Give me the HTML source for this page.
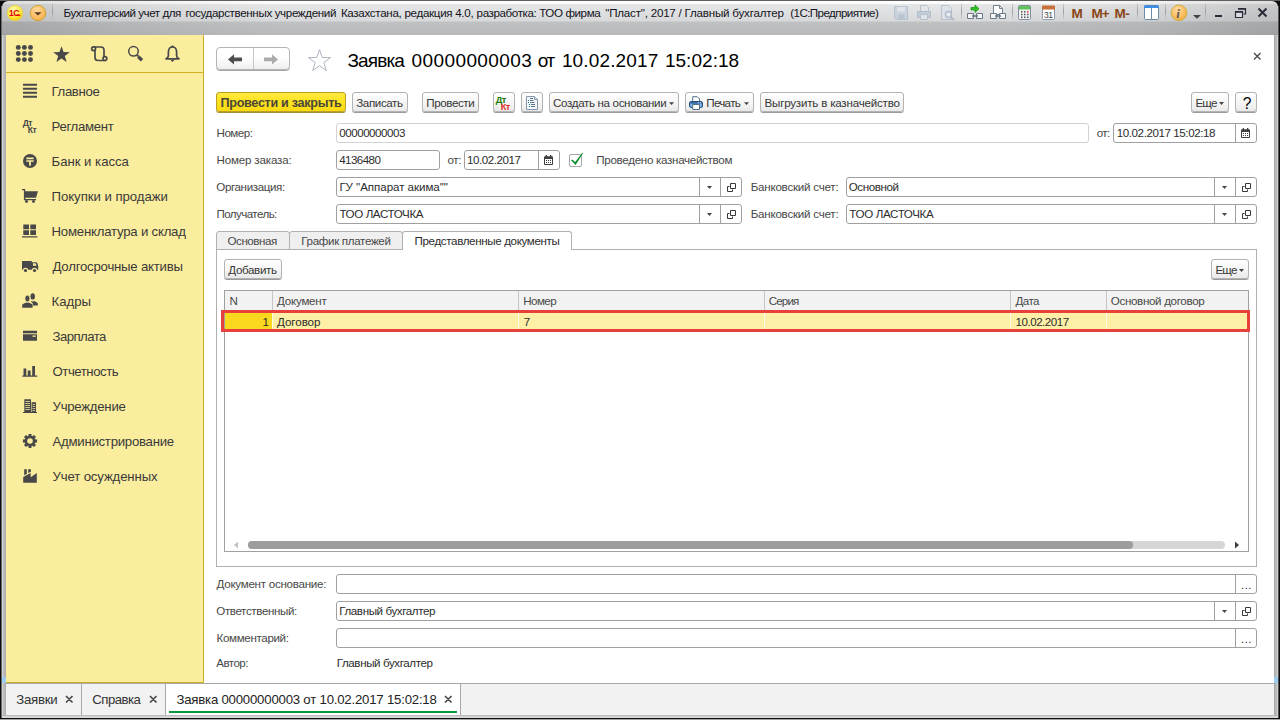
<!DOCTYPE html>
<html lang="ru">
<head>
<meta charset="utf-8">
<title>Заявка 00000000003 от 10.02.2017 15:02:18</title>
<style>
*{box-sizing:border-box;margin:0;padding:0}
html,body{width:1280px;height:720px;overflow:hidden}
body{background:#0c0c0c;font-family:"Liberation Sans",sans-serif;font-size:11px;color:#333;position:relative}
.a{position:absolute}
svg.a{z-index:5;overflow:visible}
.t{position:absolute;white-space:pre;line-height:1}
#frame{left:0;top:0;width:1280px;height:1px;background:#5e5e5e}
#fl{left:1px;top:6px;width:5px;height:712px;background:linear-gradient(90deg,#6b6b6b 0 1px,#d0d0d0 1px 2px,#bebebe 2px 3px,#b6b7b9 3px 4px,#aeafb3 4px)}
#fr{left:1274px;top:6px;width:5px;height:712px;background:linear-gradient(90deg,#a8a9ab 0 1px,#b6b7b9 1px 2px,#bbb 2px 3px,#cdcfcf 3px 4px,#555 4px)}
#fb{left:2px;top:715px;width:1276px;height:3px;background:linear-gradient(#bdbdbd 0 1px,#d0d0d0 1px 2px,#dcdcdc 2px)}
#fbb{left:0;top:719px;width:1280px;height:1px;background:#a4a4a4}
#titlebar{left:2px;top:1px;width:1276px;height:34px;border-radius:6px 6px 0 0;background:linear-gradient(90deg,rgba(0,0,0,.13) 0,rgba(0,0,0,.05) 120px,rgba(0,0,0,0) 280px,rgba(0,0,0,0) 1000px,rgba(0,0,0,.05) 1160px,rgba(0,0,0,.13) 100%),linear-gradient(#fefefe 0,#fbfbfb 2.5px,#e5e6e7 3.5px,#d8d9db 20px,#c0c1c3 21px,#b8b9bb 34px)}
#side{left:6px;top:35px;width:198px;height:648px;background:#fbed9e;border-right:1px solid #cdae24;border-bottom:1px solid #cdae24}
#sidesep{left:6px;top:72px;width:197px;height:1px;background:#cfae22}
#main{left:204px;top:35px;width:1070px;height:648px;background:#fff}
#tabs{left:6px;top:683px;width:1268px;height:32px;background:#f2f2f2;border-top:1px solid #a8a8a8}
.nav{font-size:13px;color:#3d3d3d}
.btn{position:absolute;height:20px;border:1px solid #b3b3b3;border-radius:3px;background:linear-gradient(#fff,#f4f4f4 60%,#e9e9e9);box-shadow:0 1px 0 #9b9b9b;font-size:11px;color:#333;white-space:pre;line-height:19px;text-align:center}
.inp{position:absolute;height:20px;border:1px solid #a0a0a0;border-radius:3px;background:#fff;font-size:11px;color:#222;line-height:18px;padding-left:2px;white-space:pre}
.inp.ro{border-color:#d2d2d2}
.dv{position:absolute;top:0;width:1px;height:18px;background:#a0a0a0}
.lbl{position:absolute;white-space:pre;font-size:11px;color:#404040;line-height:13px}
</style>
</head>
<body>

<!-- ICON SYMBOLS -->
<svg width="0" height="0" style="position:absolute">
<defs>
<symbol id="i-dd" viewBox="0 0 5 3"><path d="M0 0h5L2.5 3z"/></symbol>
<symbol id="i-open" viewBox="0 0 9 9"><path d="M3.5 .5h5v5h-5z M2.5 3.5h-2v5h5v-2" fill="none" stroke="#3a3a3a" stroke-width="1"/></symbol>
<symbol id="i-cal" viewBox="0 0 9 10"><rect x="0" y="1.300" width="9" height="8.700" rx="1" fill="#3f3f3f"/><path d="M1.700 0h1.300v2h-1.300zM6 0h1.300v2h-1.300z" fill="#3f3f3f"/><path d="M1 4h7v5h-7z" fill="#fff"/><path d="M2 5h1v1h-1zM4 5h1v1h-1zM6 5h1v1h-1zM2 7h1v1h-1zM4 7h1v1h-1zM6 7h1v1h-1z" fill="#3f3f3f"/></symbol>
</defs>
</svg>
<div class="a" id="frame"></div><div class="a" id="fl"></div><div class="a" id="fr"></div><div class="a" id="fb"></div><div class="a" id="fbb"></div>
<div class="a" id="titlebar"></div>
<div class="a" id="side"></div>
<div class="a" id="sidesep"></div>
<div class="a" id="main"></div>
<div class="a" id="tabs"></div>

<!-- TITLEBAR -->


<!-- TITLEBAR ICONS -->
<svg class="a" style="left:0;top:0" width="1280" height="36" viewBox="0 0 1280 36">
<defs>
<radialGradient id="g1c" cx=".4" cy=".3" r=".8"><stop offset="0" stop-color="#fffbb0"/><stop offset=".6" stop-color="#ffe53a"/><stop offset="1" stop-color="#eec400"/></radialGradient>
<radialGradient id="gor" cx=".4" cy=".3" r=".8"><stop offset="0" stop-color="#ffd9a0"/><stop offset=".7" stop-color="#fbb958"/><stop offset="1" stop-color="#f0a840"/></radialGradient>
<linearGradient id="gsep" x1="0" y1="0" x2="0" y2="1"><stop offset="0" stop-color="#a9aaad" stop-opacity=".3"/><stop offset=".5" stop-color="#9a9b9e"/><stop offset="1" stop-color="#a9aaad" stop-opacity=".3"/></linearGradient>
</defs>
<circle cx="15" cy="13" r="7.800" fill="url(#g1c)" stroke="#e4cf55" stroke-width=".8"/>
<text x="9" y="16.300" font-family="Liberation Sans,sans-serif" font-weight="bold" font-size="8.500" fill="#e3000b" style="letter-spacing:-.5px">1С</text>
<path d="M15.500 15.300h4.800" stroke="#e3000b" stroke-width="1.200"/>
<circle cx="38" cy="13" r="7.700" fill="url(#gor)" stroke="#c9a536" stroke-width="1"/>
<path d="M34.200 12.200h7.400l-3.700 3.400z" fill="#5a3b22"/>
<g fill="url(#gsep)">
<rect x="52" y="3" width="1" height="16"/><rect x="961" y="3" width="1" height="16"/><rect x="1012" y="3" width="1" height="16"/><rect x="1063" y="3" width="1" height="16"/><rect x="1137" y="3" width="1" height="16"/><rect x="1165" y="3" width="1" height="16"/><rect x="1205" y="3" width="1" height="16"/>
</g>
<!-- save (disabled) -->
<g opacity=".75">
<path d="M894.500 6.500h13v13h-11.500l-1.500-1.500z" fill="#c3cfdc" stroke="#a9b8c9"/>
<path d="M897 7h8v4.500h-8z" fill="#dfe6ee"/><path d="M898 14.500h6.500v5h-6.500z" fill="#aebccc"/>
<!-- print (disabled) -->
<path d="M920.500 5.500h6l2 2v4h-8z" fill="#e3e8ee" stroke="#aab8c8"/>
<path d="M917.500 11.500h13v6h-13z" fill="#bac7d5" stroke="#a3b2c3"/>
<path d="M920.500 14.500h7v5h-7z" fill="#e3e8ee" stroke="#aab8c8"/>
<!-- preview (disabled) -->
<path d="M941.500 5.500h7l3 3v11h-10z" fill="#dde3ea" stroke="#aab8c8"/>
<circle cx="948.500" cy="14.500" r="3" fill="#e9eef3" stroke="#9fb0c2" stroke-width="1.400"/><path d="M950.800 17l3.200 3" stroke="#9fb0c2" stroke-width="1.800"/>
</g>
<!-- link + arrow -->
<path d="M967.500 13.500h6v5h-6zM976.500 13.500h6v5h-6z" fill="#f4f6f8" stroke="#6c7885" stroke-width="1"/><path d="M972 16h6" stroke="#6c7885" stroke-width="1.600"/>
<path d="M971 7.500h4v-2.500l4 3.700l-4 3.700v-2.500h-4z" fill="#2ec320" stroke="#168a0e" stroke-width=".7"/>
<!-- link + doc -->
<path d="M993.500 5.500h6l3 3v6h-9z" fill="#fff" stroke="#77838f"/><path d="M999.500 5.500v3h3" fill="none" stroke="#77838f"/>
<path d="M990.500 13.500h6v5h-6zM999.500 13.500h6v5h-6z" fill="#f4f6f8" stroke="#6c7885" stroke-width="1"/><path d="M995 16h6" stroke="#6c7885" stroke-width="1.600"/>
<!-- calculator -->
<rect x="1018.500" y="5.500" width="12" height="14" rx="1" fill="#f1f3f4" stroke="#7f8f9e"/>
<rect x="1019" y="6" width="11" height="3.500" fill="#5fc35a"/>
<path d="M1021 11h1.500v1.500h-1.500zM1024 11h1.500v1.500h-1.500zM1021 13.700h1.500v1.500h-1.500zM1024 13.700h1.500v1.500h-1.500zM1021 16.400h1.500v1.500h-1.500zM1024 16.400h1.500v1.500h-1.500zM1027 13.700h1.500v1.500h-1.500zM1027 16.400h1.500v1.500h-1.500z" fill="#555"/><path d="M1027 11h1.500v1.500h-1.500z" fill="#e33"/>
<!-- calendar -->
<rect x="1042.500" y="6.500" width="12" height="13" rx="1" fill="#fff" stroke="#8b99a7"/>
<path d="M1042 6.500c0-.6.400-1 1-1h11c.6 0 1 .4 1 1v3h-13z" fill="#c9703a"/>
<text x="1044" y="18" font-family="Liberation Sans,sans-serif" font-size="8.500" fill="#444" style="letter-spacing:-.4px">31</text>
<!-- M M+ M- -->
<g font-family="Liberation Sans,sans-serif" font-weight="bold" font-size="13.500" fill="#8a4513">
<text x="1071.500" y="18">M</text><text x="1091.500" y="18" style="letter-spacing:-1px">M+</text><text x="1114.500" y="18" style="letter-spacing:-.5px">M-</text>
</g>
<!-- panels -->
<rect x="1144.500" y="5.500" width="14" height="14" rx="1" fill="#fff" stroke="#6f8aa8"/>
<path d="M1144 6.500c0-.6.400-1 1-1h13c.6 0 1 .4 1 1v1.500h-15z" fill="#3d8ee6"/>
<path d="M1151.500 8v11.500" stroke="#6f8aa8"/>
<!-- info -->
<circle cx="1179" cy="12.800" r="7.800" fill="url(#gor)" stroke="#cdae3e" stroke-width="1"/>
<text x="1176.300" y="17.500" font-family="Liberation Serif,serif" font-weight="bold" font-style="italic" font-size="13" fill="#5c5c5c">i</text>
<path d="M1193 15h8l-4 3.800z" fill="#444"/>
<!-- window controls -->
<path d="M1215 15h7v2h-7z" fill="#2b2b3a"/>
<path d="M1238.500 8.500h7v5.500h-2" fill="none" stroke="#2b2b3a" stroke-width="1.200"/><path d="M1238 8h8v1.800h-8z" fill="#2b2b3a"/>
<path d="M1235.500 11.500h7v6h-7z" fill="#dcdde0" stroke="#2b2b3a" stroke-width="1.200"/><path d="M1235 11h8v1.800h-8z" fill="#2b2b3a"/>
<path d="M1258.500 8.500l8 8M1266.500 8.500l-8 8" stroke="#2b2b3a" stroke-width="2"/>
</svg>

<!-- SIDEBAR -->


<!-- SIDEBAR ICONS -->
<svg class="a" style="left:0;top:0" width="204" height="500" viewBox="0 0 204 500" fill="#484848">
<g><circle cx="18.3" cy="47.4" r="2.45"/><circle cx="24.4" cy="47.4" r="2.45"/><circle cx="30.5" cy="47.4" r="2.45"/><circle cx="18.3" cy="53.5" r="2.45"/><circle cx="24.4" cy="53.5" r="2.45"/><circle cx="30.5" cy="53.5" r="2.45"/><circle cx="18.3" cy="59.6" r="2.45"/><circle cx="24.4" cy="59.6" r="2.45"/><circle cx="30.5" cy="59.6" r="2.45"/></g>
<polygon points="61.50,46.20 63.56,52.07 69.77,52.21 64.83,55.98 66.61,61.94 61.50,58.40 56.39,61.94 58.17,55.98 53.23,52.21 59.44,52.07"/>
<g fill="none" stroke="#484848" stroke-width="1.7" stroke-linejoin="round" stroke-linecap="round">
<path d="M95 50.5v7c0 2 1.3 3 3 3h7"/>
<path d="M93.6 47h7.4c2 0 3 1.2 3 3v6.5"/>
<circle cx="93.6" cy="48.8" r="1.9" fill="#fbed9e"/><circle cx="104.9" cy="58.6" r="1.9" fill="#fbed9e"/>
</g>
<circle cx="133.5" cy="51.3" r="4.800" fill="none" stroke="#484848" stroke-width="1.500"/>
<path d="M138.300 56.800l3.700 3.400" stroke="#484848" stroke-width="3.400" stroke-linecap="butt"/>
<path d="M137 55l1.500 1.500" stroke="#484848" stroke-width="1.800"/>
<path d="M166 58.800c1.800-.9 2.400-2 2.400-3.300v-3.500c0-3 1.700-5.200 4.100-5.200s4.100 2.200 4.100 5.200v3.500c0 1.300.6 2.400 2.400 3.300z" fill="none" stroke="#484848" stroke-width="1.700" stroke-linejoin="round"/>
<path d="M171.100 46.800l1.400-1.900l1.400 1.900zM170.300 59.800h4.400l-2.200 2.200z"/>
<!-- nav icons -->
<path d="M23 84h14v2h-14zM23 88h14v2h-14zM23 92h14v2h-14zM23 96h14v2h-14z" transform="translate(0,-.3)"/>
<text x="22.800" y="125.700" font-family="Liberation Sans,sans-serif" font-weight="bold" font-size="8.600" style="letter-spacing:-.6px">Дт</text>
<text x="27.800" y="133.200" font-family="Liberation Sans,sans-serif" font-weight="bold" font-size="8.600" style="letter-spacing:-.6px">Кт</text>
<circle cx="30" cy="161" r="7"/>
<path d="M26.300 157.500h7.400v1.700h-7.400zM26.300 160.200h7.400v1.600h-2.800v4h-1.800v-4h-2.800z" fill="#fbed9e"/>
<!-- cart -->
<path d="M22 189h3.200v2.200h12.800l-2 6.500h-10.800v1.300h10.800v1.300h-12.100v-10h-1.900z"/>
<circle cx="26.500" cy="201.500" r="1.450"/><circle cx="33.500" cy="201.500" r="1.450"/>
<!-- boxes -->
<path d="M23.300 224.500h5.700v4.700h-5.700zM30.300 224.500h5.700v4.700h-5.700zM23.300 230.300h5.700v4.700h-5.700zM30.300 230.300h5.700v4.700h-5.700zM22 236.200h15.400v1.400h-15.400z"/>
<!-- truck -->
<path d="M22 261h9.800v1.200h4c.8 0 1.400.4 1.600 1.100l.8 2.700v3.700h-16.200z"/>
<path d="M33 263.200h2.600l1 2.600h-3.600z" fill="#fbed9e"/>
<circle cx="25.500" cy="270.500" r="2.700" fill="#fbed9e"/><circle cx="34.500" cy="270.500" r="2.700" fill="#fbed9e"/>
<circle cx="25.500" cy="270.500" r="1.600"/><circle cx="34.500" cy="270.500" r="1.600"/>
<!-- people -->
<ellipse cx="32.700" cy="296.400" rx="2.200" ry="3.200"/>
<path d="M31 301c1.200.5 2.200.5 3.400 0l2.600 1.500c.5.300.8.700.8 1.300v1.700h-5v-1.500c0-1-.6-1.600-1.800-2.200z"/>
<ellipse cx="27.400" cy="298.500" rx="2.400" ry="3.300" stroke="#fbed9e" stroke-width=".6"/>
<path d="M22.200 307.700v-2.400c0-.6.300-1 .8-1.300l3.200-1.500c.8.400 1.600.4 2.400 0l3.200 1.500c.5.300.8.700.8 1.300v2.400z"/>
<!-- card -->
<path d="M23 330.700h14v2.500h-14zM23 334.300h14v6.500h-14z"/><path d="M32.500 335.500h3.300v1.300h-3.300z" fill="#fbed9e"/>
<!-- chart -->
<path d="M23.500 368.500h2.800v7h-2.800zM27.800 370.500h2.800v5h-2.800zM32.200 366h2.800v9.500h-2.800zM22.300 375.500h15v1.200h-15z"/>
<!-- building -->
<path d="M24.300 399.300h6.700v13h-6.700zM31.600 402.300h4.400v10h-4.400zM23 412h14v1h-14z"/>
<path d="M25.300 401h4.700v.8h-4.700zM25.300 403h4.700v.8h-4.700zM25.300 405h4.700v.8h-4.700zM25.300 407h4.700v.8h-4.700zM25.300 409h4.700v.8h-4.700zM32.500 404h2.600v.8h-2.600zM32.500 406h2.600v.8h-2.600zM32.500 408h2.600v.8h-2.600zM32.500 410h2.600v.8h-2.600z" fill="#fbed9e"/>
<!-- gear -->
<path d="M34.93,439.34 L37.06,439.61 L37.06,442.39 L34.93,442.66 L34.66,443.32 L35.98,445.01 L34.01,446.98 L32.32,445.66 L31.66,445.93 L31.39,448.06 L28.61,448.06 L28.34,445.93 L27.68,445.66 L25.99,446.98 L24.02,445.01 L25.34,443.32 L25.07,442.66 L22.94,442.39 L22.94,439.61 L25.07,439.34 L25.34,438.68 L24.02,436.99 L25.99,435.02 L27.68,436.34 L28.34,436.07 L28.61,433.94 L31.39,433.94 L31.66,436.07 L32.32,436.34 L34.01,435.02 L35.98,436.99 L34.66,438.68z"/><circle cx="30" cy="441" r="2.800" fill="#fbed9e"/>
<!-- factory -->
<path d="M23.200 482.800v-5.800l7.500-3.900v4.200l6.100-4.300v9.800zM24.200 469.200h2.600v4.700l-2.600 1.400zM28.200 469.200h2.700v2.500l-2.700 1.400z"/>
</svg>

<!-- HEADER -->


<!-- NAV / STAR / CLOSE -->
<div class="a" style="left:216px;top:47px;width:74px;height:23px;border:1px solid #b4b4b4;border-radius:4px;background:linear-gradient(#fff 40%,#efefef);box-shadow:0 1px 0 #a6a6a6"></div>
<div class="a" style="left:253px;top:48px;width:1px;height:21px;background:#c8c8c8"></div>
<svg class="a" style="left:0;top:36px" width="1280" height="40" viewBox="0 36 1280 40">
<path d="M228 59.400l6-5.200v3.400h8v3.600h-8v3.400z" fill="#4d4d4d"/>
<path d="M278 59.400l-6-5.200v3.400h-8v3.600h8v3.400z" fill="#ababab"/>
<polygon points="319.50,49.60 322.20,57.48 330.53,57.62 323.87,62.62 326.32,70.58 319.50,65.80 312.68,70.58 315.13,62.62 308.47,57.62 316.80,57.48" fill="#fff" stroke="#aab4c0" stroke-width="1"/>
<path d="M1254 53l6.500 6.500M1260.500 53l-6.500 6.500" stroke="#4a4a4a" stroke-width="1.400"/>
</svg>
<!-- TOOLBAR ICONS -->
<svg class="a" style="left:480px;top:90px" width="280" height="26" viewBox="480 90 280 26">
<text x="495.800" y="102.900" font-family="Liberation Sans,sans-serif" font-weight="bold" font-size="9.200" fill="#1b7a00" style="letter-spacing:-.6px">Дт</text>
<text x="500.800" y="110.200" font-family="Liberation Sans,sans-serif" font-weight="bold" font-size="9.200" fill="#e6302a" style="letter-spacing:-.6px">Кт</text>
<path d="M526.500 96.500h8l3 3v10h-11z" fill="#f3f6f8" stroke="#8497ab"/><path d="M534.500 96.500v3h3" fill="#d7e6e4" stroke="#8497ab"/>
<path d="M528 100.500h1M528 102.500h1M529 104.500h1M529 106.500h1" stroke="#1f6f8a" stroke-width="1"/>
<path d="M530 98.500h3M530 100.500h3.500M530 102.500h4.500M531 104.500h4M531 106.500h4" stroke="#5d7389" stroke-width="1"/>
<path d="M669 102.300h5l-2.500 2.700z" fill="#444"/>
<path d="M692.700 96.700h4.600l2.200 2.200v2.600h-6.800z" fill="#fff" stroke="#55728c" stroke-width="1"/>
<rect x="689.500" y="101.500" width="13" height="6" rx="1.600" fill="#5b8bc9" stroke="#1f4e79" stroke-width="1"/>
<path d="M690.500 102h11v1.600h-11z" fill="#3c6aa6"/><path d="M690.500 104h2v3h-2zM699.500 104h2v3h-2z" fill="#8db4e0"/>
<path d="M697.800 102.200h1v1h-1zM699.800 102.200h1v1h-1z" fill="#fff"/>
<path d="M692.700 104.500h6.800v5h-6.800z" fill="#fff" stroke="#55728c" stroke-width="1"/>
<path d="M744 102.300h5l-2.500 2.700z" fill="#444"/>
</svg>
<svg class="a" style="left:1219px;top:102px" width="5" height="3" fill="#444"><use href="#i-dd"/></svg>
<svg class="a" style="left:1239px;top:269px" width="5" height="3" fill="#444"><use href="#i-dd"/></svg>
<!-- CHECKBOX -->
<div class="a" style="left:569px;top:154px;width:13px;height:13px;border:1px solid #a6a6a6;border-radius:2px;background:#fff"></div>
<svg class="a" style="left:568px;top:150px" width="18" height="18" viewBox="568 150 18 18"><path d="M571 160.300l1.200-.8l3 2.600l7-9.300l.8.500l-7.400 11.700z" fill="#0b8f2f"/></svg>
<!-- SCROLL ARROWS -->
<svg class="a" style="left:230px;top:538px" width="1020" height="14" viewBox="230 538 1020 14"><path d="M234 545l4-3.500v7z" fill="#c4c4c4"/><path d="M1239 545l-4-3.500v7z" fill="#3c3c3c"/></svg>
<!-- TAB CLOSE X -->
<svg class="a" style="left:0;top:690px" width="470" height="20" viewBox="0 690 470 20" stroke="#4a4a4a" stroke-width="1.700"><path d="M66 696l6.500 6.500M72.500 696l-6.500 6.500M150 696l6.500 6.500M156.500 696l-6.500 6.500M445 696l6.500 6.500M451.500 696l-6.500 6.500"/></svg>

<!-- TOOLBAR -->
<div class="btn" id="b1" style="left:216px;top:92px;width:130px;background:linear-gradient(#ffea40,#fde21f 50%,#f9da12);border-color:#b9a024;box-shadow:0 1px 0 #a4923a"></div>
<div class="btn" style="left:352px;top:92px;width:56px"></div>
<div class="btn" style="left:422px;top:92px;width:57px"></div>
<div class="btn" style="left:493px;top:92px;width:22px"></div>
<div class="btn" style="left:521px;top:92px;width:22px"></div>
<div class="btn" style="left:549px;top:92px;width:130px;text-align:left;padding-left:3px"></div>
<div class="btn" style="left:685px;top:92px;width:69px;text-align:left;padding-left:21px"></div>
<div class="btn" style="left:760px;top:92px;width:144px"></div>
<div class="btn" style="left:1191px;top:92px;width:38px;text-align:left;padding-left:4px"></div>
<div class="btn" style="left:1235px;top:92px;width:22px;font-size:15px;font-weight:bold;color:#000"></div>

<!-- FORM ROWS -->
<div class="inp ro" style="left:336px;top:123px;width:753px"></div>
<div class="inp" style="left:1113px;top:123px;width:144px"><div class="dv" style="left:121px"></div><svg class="a" style="left:127px;top:4px" width="9" height="10"><use href="#i-cal"/></svg></div>

<div class="inp" style="left:336px;top:150px;width:104px"></div>
<div class="inp" style="left:464px;top:150px;width:96px"><div class="dv" style="left:73px"></div><svg class="a" style="left:79px;top:4px" width="9" height="10"><use href="#i-cal"/></svg></div>

<div class="inp" style="left:336px;top:177px;width:406px"><div class="dv" style="left:362px"></div><svg class="a" style="left:370px;top:8px" width="5" height="3" fill="#444"><use href="#i-dd"/></svg><div class="dv" style="left:383px"></div><svg class="a" style="left:390px;top:5px" width="9" height="9"><use href="#i-open"/></svg></div>
<div class="inp" style="left:846px;top:177px;width:411px"><div class="dv" style="left:367px"></div><svg class="a" style="left:375px;top:8px" width="5" height="3" fill="#444"><use href="#i-dd"/></svg><div class="dv" style="left:388px"></div><svg class="a" style="left:395px;top:5px" width="9" height="9"><use href="#i-open"/></svg></div>

<div class="inp" style="left:336px;top:204px;width:406px"><div class="dv" style="left:362px"></div><svg class="a" style="left:370px;top:8px" width="5" height="3" fill="#444"><use href="#i-dd"/></svg><div class="dv" style="left:383px"></div><svg class="a" style="left:390px;top:5px" width="9" height="9"><use href="#i-open"/></svg></div>
<div class="inp" style="left:846px;top:204px;width:411px"><div class="dv" style="left:367px"></div><svg class="a" style="left:375px;top:8px" width="5" height="3" fill="#444"><use href="#i-dd"/></svg><div class="dv" style="left:388px"></div><svg class="a" style="left:395px;top:5px" width="9" height="9"><use href="#i-open"/></svg></div>

<!-- TAB PANEL -->
<div class="a" id="panel" style="left:216px;top:249px;width:1041px;height:318px;border:1px solid #b0b0b0;background:#fff"></div>
<div class="a tab" style="left:216px;top:231px;width:74px;height:19px;border:1px solid #b0b0b0;border-radius:3px 3px 0 0;background:#efefef"></div>
<div class="a tab" style="left:289px;top:231px;width:114px;height:19px;border:1px solid #b0b0b0;border-radius:3px 3px 0 0;background:#efefef"></div>
<div class="a tab" style="left:402px;top:231px;width:170px;height:19px;border:1px solid #b0b0b0;border-bottom:none;border-radius:3px 3px 0 0;background:#fff"></div>

<div class="btn" style="left:224px;top:259px;width:58px"></div>
<div class="btn" style="left:1211px;top:259px;width:38px;text-align:left;padding-left:4px"></div>

<!-- TABLE -->
<div class="a" id="tbl" style="left:224px;top:290px;width:1025px;height:262px;border:1px solid #a0a0a0;background:#fff"></div>
<div class="a" id="thead" style="left:225px;top:291px;width:1023px;height:20px;background:#f2f2f2;border-bottom:1px solid #d0d0d0"></div>
<div class="a" id="trow" style="left:225px;top:311px;width:1023px;height:20px;background:#fdf0a6"></div>
<div class="a" style="left:225px;top:311px;width:47px;height:20px;background:#fad81e"></div>
<div class="a" style="left:272px;top:291px;width:1px;height:19px;background:#c6c6c6"></div><div class="a" style="left:272px;top:311px;width:1px;height:20px;background:#fffbe6"></div><div class="a" style="left:518px;top:291px;width:1px;height:19px;background:#c6c6c6"></div><div class="a" style="left:518px;top:311px;width:1px;height:20px;background:#fffbe6"></div><div class="a" style="left:764px;top:291px;width:1px;height:19px;background:#c6c6c6"></div><div class="a" style="left:764px;top:311px;width:1px;height:20px;background:#fffbe6"></div><div class="a" style="left:1010px;top:291px;width:1px;height:19px;background:#c6c6c6"></div><div class="a" style="left:1010px;top:311px;width:1px;height:20px;background:#fffbe6"></div><div class="a" style="left:1106px;top:291px;width:1px;height:19px;background:#c6c6c6"></div><div class="a" style="left:1106px;top:311px;width:1px;height:20px;background:#fffbe6"></div>
<div class="a" id="red" style="left:221px;top:310px;width:1029px;height:22px;border:3px solid #e8413c"></div>


<!-- SCROLLBAR -->
<div class="a" style="left:248px;top:541px;width:977px;height:8px;border-radius:4px;background:#d6d6d6"></div>
<div class="a" style="left:248px;top:541px;width:885px;height:8px;border-radius:4px;background:#9c9c9c"></div>

<!-- BOTTOM FIELDS -->
<div class="inp" style="left:336px;top:574px;width:921px"><div class="dv" style="left:898px"></div><span class="a" style="left:904px;top:1px;letter-spacing:.6px">...</span></div>
<div class="inp" style="left:336px;top:601px;width:921px"><div class="dv" style="left:877px"></div><svg class="a" style="left:885px;top:8px" width="5" height="3" fill="#444"><use href="#i-dd"/></svg><div class="dv" style="left:898px"></div><svg class="a" style="left:905px;top:5px" width="9" height="9"><use href="#i-open"/></svg></div>
<div class="inp" style="left:336px;top:628px;width:921px"><div class="dv" style="left:898px"></div><span class="a" style="left:904px;top:1px;letter-spacing:.6px">...</span></div>

<!-- BOTTOM TABS -->
<div class="a" style="left:166px;top:684px;width:294px;height:31px;background:#fff"></div>
<div class="a" style="left:81px;top:684px;width:1px;height:31px;background:#a8a8a8"></div>
<div class="a" style="left:165px;top:684px;width:1px;height:31px;background:#a8a8a8"></div>
<div class="a" style="left:460px;top:684px;width:1px;height:31px;background:#a8a8a8"></div>
<div class="a" style="left:169px;top:711px;width:288px;height:2px;background:#0b9a3b"></div>
<div class="a" style="left:2px;top:677px;width:4px;height:6px;background:#9ccbf0"></div>
<div class="a" style="left:1274px;top:677px;width:4px;height:6px;background:#9ccbf0"></div>
<!-- TEXTS -->
<div class="t" style="left:63.50px;top:6.90px;font-size:11.6px;color:#141420;letter-spacing:-0.463px">Бухгалтерский учет для</div>
<div class="t" style="left:185.40px;top:6.90px;font-size:11.6px;color:#141420;letter-spacing:-0.359px">государственных учреждений</div>
<div class="t" style="left:340.90px;top:6.90px;font-size:11.6px;color:#141420;letter-spacing:-0.307px">Казахстана, редакция 4.0,</div>
<div class="t" style="left:476.60px;top:6.90px;font-size:11.6px;color:#141420;letter-spacing:-0.397px">разработка: ТОО фирма</div>
<div class="t" style="left:605.30px;top:6.90px;font-size:11.6px;color:#141420;letter-spacing:-0.216px">"Пласт", 2017 / Главный бухгалтер</div>
<div class="t" style="left:790.30px;top:6.90px;font-size:11.6px;color:#141420;letter-spacing:-0.584px">(1С:Предприятие)</div>
<div class="t" style="left:51.50px;top:84.75px;font-size:13.2px;color:#3a3a3a;letter-spacing:-0.359px">Главное</div>
<div class="t" style="left:51.50px;top:119.75px;font-size:13.2px;color:#3a3a3a;letter-spacing:-0.317px">Регламент</div>
<div class="t" style="left:51.50px;top:154.75px;font-size:13.2px;color:#3a3a3a;letter-spacing:-0.020px">Банк и касса</div>
<div class="t" style="left:51.50px;top:189.75px;font-size:13.2px;color:#3a3a3a;letter-spacing:-0.042px">Покупки и продажи</div>
<div class="t" style="left:51.50px;top:224.75px;font-size:13.2px;color:#3a3a3a;letter-spacing:-0.210px">Номенклатура и склад</div>
<div class="t" style="left:52.50px;top:259.75px;font-size:13.2px;color:#3a3a3a;letter-spacing:-0.219px">Долгосрочные активы</div>
<div class="t" style="left:51.50px;top:294.75px;font-size:13.2px;color:#3a3a3a;letter-spacing:-0.011px">Кадры</div>
<div class="t" style="left:52.50px;top:329.75px;font-size:13.2px;color:#3a3a3a;letter-spacing:-0.558px">Зарплата</div>
<div class="t" style="left:52.50px;top:364.75px;font-size:13.2px;color:#3a3a3a;letter-spacing:-0.456px">Отчетность</div>
<div class="t" style="left:52.50px;top:399.75px;font-size:13.2px;color:#3a3a3a;letter-spacing:-0.252px">Учреждение</div>
<div class="t" style="left:52.50px;top:434.75px;font-size:13.2px;color:#3a3a3a;letter-spacing:-0.260px">Администрирование</div>
<div class="t" style="left:52.50px;top:469.75px;font-size:13.2px;color:#3a3a3a;letter-spacing:-0.137px">Учет осужденных</div>
<div class="t" style="left:347.50px;top:50.70px;font-size:19px;color:#000;letter-spacing:-0.871px">Заявка</div>
<div class="t" style="left:411.60px;top:50.70px;font-size:19px;color:#000;letter-spacing:0.393px">00000000003</div>
<div class="t" style="left:537.80px;top:50.70px;font-size:19px;color:#000;letter-spacing:-1.349px">от</div>
<div class="t" style="left:561.90px;top:50.70px;font-size:19px;color:#000;letter-spacing:0.142px">10.02.2017</div>
<div class="t" style="left:664.90px;top:50.70px;font-size:19px;color:#000;letter-spacing:0.044px">15:02:18</div>
<div class="t" style="left:220.50px;top:97.00px;font-size:12.6px;color:#4b4637;font-weight:700;letter-spacing:-0.295px">Провести и закрыть</div>
<div class="t" style="left:356.25px;top:97.00px;font-size:11.6px;color:#363636;letter-spacing:-0.394px">Записать</div>
<div class="t" style="left:426.25px;top:97.00px;font-size:11.6px;color:#363636;letter-spacing:-0.402px">Провести</div>
<div class="t" style="left:553.00px;top:97.00px;font-size:11.6px;color:#363636;letter-spacing:-0.345px">Создать на основании</div>
<div class="t" style="left:706.25px;top:97.00px;font-size:11.6px;color:#363636;letter-spacing:-0.688px">Печать</div>
<div class="t" style="left:764.50px;top:97.00px;font-size:11.6px;color:#363636;letter-spacing:-0.209px">Выгрузить в казначейство</div>
<div class="t" style="left:1195.50px;top:96.90px;font-size:11.6px;color:#363636;letter-spacing:-0.871px">Еще</div>
<div class="t" style="left:1242.70px;top:95.80px;font-size:15.6px;color:#000">?</div>
<div class="t" style="left:216.50px;top:126.80px;font-size:11.6px;color:#484848;letter-spacing:-0.487px">Номер:</div>
<div class="t" style="left:339.25px;top:126.80px;font-size:11.6px;color:#2c2c2c;letter-spacing:-0.473px">00000000003</div>
<div class="t" style="left:1096.75px;top:126.80px;font-size:11.6px;color:#484848;letter-spacing:-0.627px">от:</div>
<div class="t" style="left:1116.75px;top:126.80px;font-size:11.6px;color:#2c2c2c;letter-spacing:-0.427px">10.02.2017 15:02:18</div>
<div class="t" style="left:216.50px;top:153.90px;font-size:11.6px;color:#484848;letter-spacing:-0.173px">Номер заказа:</div>
<div class="t" style="left:339.25px;top:153.90px;font-size:11.6px;color:#2c2c2c;letter-spacing:-0.573px">4136480</div>
<div class="t" style="left:447.50px;top:153.90px;font-size:11.6px;color:#484848;letter-spacing:-0.377px">от:</div>
<div class="t" style="left:467.00px;top:153.90px;font-size:11.6px;color:#2c2c2c;letter-spacing:-0.453px">10.02.2017</div>
<div class="t" style="left:596.25px;top:153.90px;font-size:11.6px;color:#484848;letter-spacing:-0.300px">Проведено казначейством</div>
<div class="t" style="left:216.25px;top:181.10px;font-size:11.6px;color:#484848;letter-spacing:-0.380px">Организация:</div>
<div class="t" style="left:339.40px;top:181.10px;font-size:11.6px;color:#2c2c2c;letter-spacing:-0.059px">ГУ "Аппарат акима""</div>
<div class="t" style="left:750.70px;top:181.10px;font-size:11.6px;color:#484848;letter-spacing:-0.237px">Банковский счет:</div>
<div class="t" style="left:848.75px;top:181.10px;font-size:11.6px;color:#2c2c2c;letter-spacing:-0.432px">Основной</div>
<div class="t" style="left:216.50px;top:208.10px;font-size:11.6px;color:#484848;letter-spacing:-0.577px">Получатель:</div>
<div class="t" style="left:339.40px;top:208.10px;font-size:11.6px;color:#2c2c2c;letter-spacing:-0.395px">ТОО ЛАСТОЧКА</div>
<div class="t" style="left:750.70px;top:208.10px;font-size:11.6px;color:#484848;letter-spacing:-0.237px">Банковский счет:</div>
<div class="t" style="left:849.30px;top:208.10px;font-size:11.6px;color:#2c2c2c;letter-spacing:-0.363px">ТОО ЛАСТОЧКА</div>
<div class="t" style="left:227.50px;top:235.20px;font-size:11.6px;color:#484848;letter-spacing:-0.454px">Основная</div>
<div class="t" style="left:301.25px;top:235.20px;font-size:11.6px;color:#484848;letter-spacing:-0.323px">График платежей</div>
<div class="t" style="left:414.50px;top:235.20px;font-size:11.6px;color:#2c2c2c;letter-spacing:-0.360px">Представленные документы</div>
<div class="t" style="left:228.25px;top:263.90px;font-size:11.6px;color:#363636;letter-spacing:-0.350px">Добавить</div>
<div class="t" style="left:1215.50px;top:263.90px;font-size:11.6px;color:#363636;letter-spacing:-0.871px">Еще</div>
<div class="t" style="left:229.50px;top:295.00px;font-size:11.6px;color:#484848">N</div>
<div class="t" style="left:277.00px;top:295.00px;font-size:11.6px;color:#484848;letter-spacing:-0.231px">Документ</div>
<div class="t" style="left:523.25px;top:295.00px;font-size:11.6px;color:#484848;letter-spacing:-0.560px">Номер</div>
<div class="t" style="left:768.75px;top:295.00px;font-size:11.6px;color:#484848;letter-spacing:-0.874px">Серия</div>
<div class="t" style="left:1015.50px;top:295.00px;font-size:11.6px;color:#484848;letter-spacing:-0.575px">Дата</div>
<div class="t" style="left:1110.75px;top:295.00px;font-size:11.6px;color:#484848;letter-spacing:-0.332px">Основной договор</div>
<div class="t" style="left:262.50px;top:316.00px;font-size:11.6px;color:#2c2c2c">1</div>
<div class="t" style="left:277.00px;top:316.00px;font-size:11.6px;color:#2c2c2c;letter-spacing:-0.055px">Договор</div>
<div class="t" style="left:523.75px;top:316.00px;font-size:11.6px;color:#2c2c2c">7</div>
<div class="t" style="left:1015.50px;top:316.00px;font-size:11.6px;color:#2c2c2c;letter-spacing:-0.481px">10.02.2017</div>
<div class="t" style="left:216.50px;top:578.00px;font-size:11.6px;color:#484848;letter-spacing:-0.267px">Документ основание:</div>
<div class="t" style="left:216.25px;top:605.00px;font-size:11.6px;color:#484848;letter-spacing:-0.388px">Ответственный:</div>
<div class="t" style="left:339.25px;top:605.00px;font-size:11.6px;color:#2c2c2c;letter-spacing:-0.405px">Главный бухгалтер</div>
<div class="t" style="left:216.50px;top:631.90px;font-size:11.6px;color:#484848;letter-spacing:-0.343px">Комментарий:</div>
<div class="t" style="left:216.25px;top:657.00px;font-size:11.6px;color:#484848;letter-spacing:-0.543px">Автор:</div>
<div class="t" style="left:336.75px;top:657.00px;font-size:11.6px;color:#2c2c2c;letter-spacing:-0.405px">Главный бухгалтер</div>
<div class="t" style="left:16.30px;top:692.80px;font-size:13.2px;color:#333;letter-spacing:-0.263px">Заявки</div>
<div class="t" style="left:92.25px;top:692.80px;font-size:13.2px;color:#333;letter-spacing:-0.508px">Справка</div>
<div class="t" style="left:176.40px;top:692.80px;font-size:13.2px;color:#222;letter-spacing:-0.204px">Заявка 00000000003 от 10.02.2017 15:02:18</div>
</body>
</html>
